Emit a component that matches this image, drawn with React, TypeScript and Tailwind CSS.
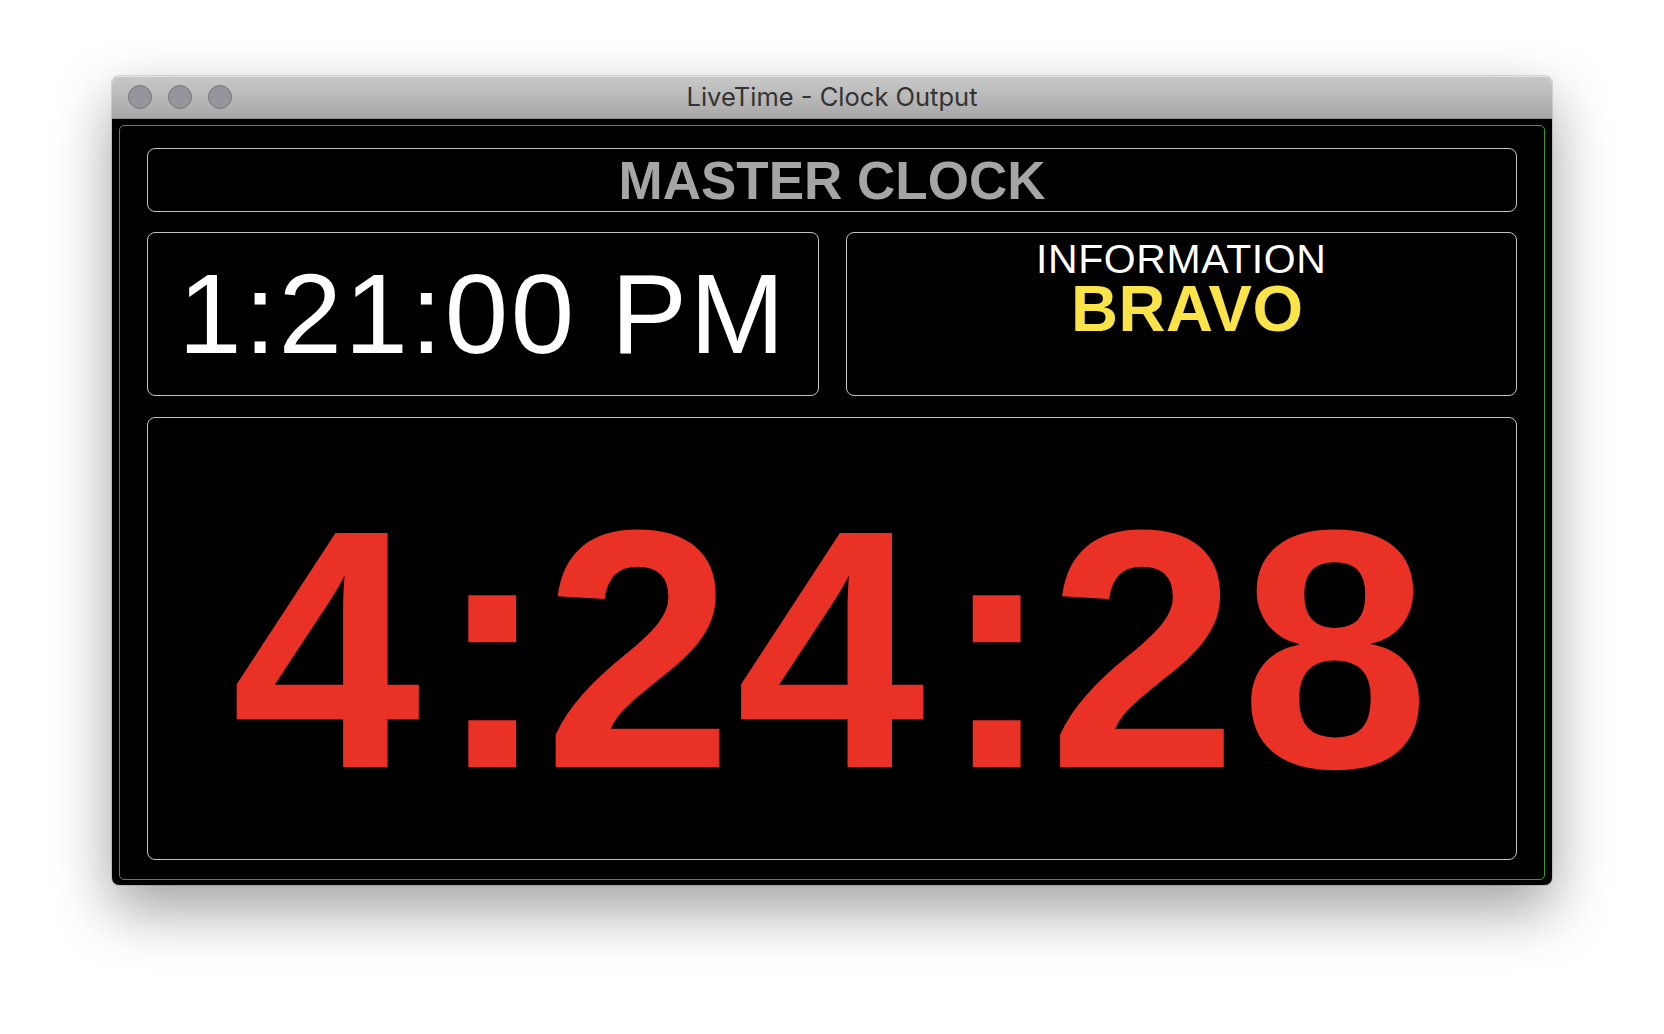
import React from "react";

function Light() {
  return (
    <div className="h-[24px] w-[24px] rounded-full border border-[#78777c] bg-[#96959b]" />
  );
}

export default function App() {
  return (
    <div
      className="min-h-[1034px] w-full bg-white pt-[76px]"
      style={{ fontFamily: '"Liberation Sans", Arial, sans-serif' }}
    >
      <div className="mx-auto flex h-[809px] w-[1440px] flex-col overflow-hidden rounded-[7px] shadow-[0_24px_60px_rgba(0,0,0,0.38),0_0_0_1px_rgba(0,0,0,0.12)]">
        {/* title bar */}
        <div className="relative flex h-[43px] shrink-0 items-center border-b border-[#8f8f8f] bg-gradient-to-b from-[#c9c9c9] to-[#a8a8a8] shadow-[inset_0_1px_0_rgba(255,255,255,0.45)]">
          <div className="ml-[16px] flex gap-[16px]">
            <Light />
            <Light />
            <Light />
          </div>
          <div
            className="absolute inset-0 flex items-center justify-center text-[25.5px] text-[#333333]"
            style={{ fontFamily: 'Inter, "Noto Sans", sans-serif' }}
          >
            LiveTime - Clock Output
          </div>
        </div>
        {/* body */}
        <div className="flex flex-1 flex-col bg-black px-[7px] pb-[5px] pt-[6px]">
          <div className="flex flex-1 flex-col rounded-[5px] border border-[#3a9a2a] px-[27px] pb-[19px] pt-[22px]">
            <div className="flex h-[64px] shrink-0 items-center justify-center rounded-[8px] border-[1.5px] border-[#c4c4c4]">
              <span className="text-[53px] font-bold leading-none text-[#a5a5a5]">
                MASTER CLOCK
              </span>
            </div>
            <div className="mt-[20px] grid h-[164px] shrink-0 grid-cols-2 gap-[27px]">
              <div className="flex items-center justify-center rounded-[8px] border-[1.5px] border-[#c4c4c4]">
                <span className="text-[114px] leading-none tracking-[2.6px] text-white">
                  1:21:00 PM
                </span>
              </div>
              <div className="flex flex-col items-center rounded-[8px] border-[1.5px] border-[#c4c4c4] pt-[6px]">
                <span className="text-[41px] leading-none tracking-[0.6px] text-white">INFORMATION</span>
                <span className="ml-[12px] text-[65px] font-bold leading-[0.9] tracking-[0.5px] text-[#fbe34a]">
                  BRAVO
                </span>
              </div>
            </div>
            <div className="mt-[21px] flex flex-1 items-center justify-center rounded-[8px] border-[1.5px] border-[#c4c4c4] pt-[20px]">
              <span className="text-[340px] font-bold leading-none tracking-[3px] text-[#e93225]">
                4<span className="ml-[12px] mr-[-8px]">:</span>24<span className="ml-[12px] mr-[-8px]">:</span>28
              </span>
            </div>
          </div>
        </div>
      </div>
    </div>
  );
}
